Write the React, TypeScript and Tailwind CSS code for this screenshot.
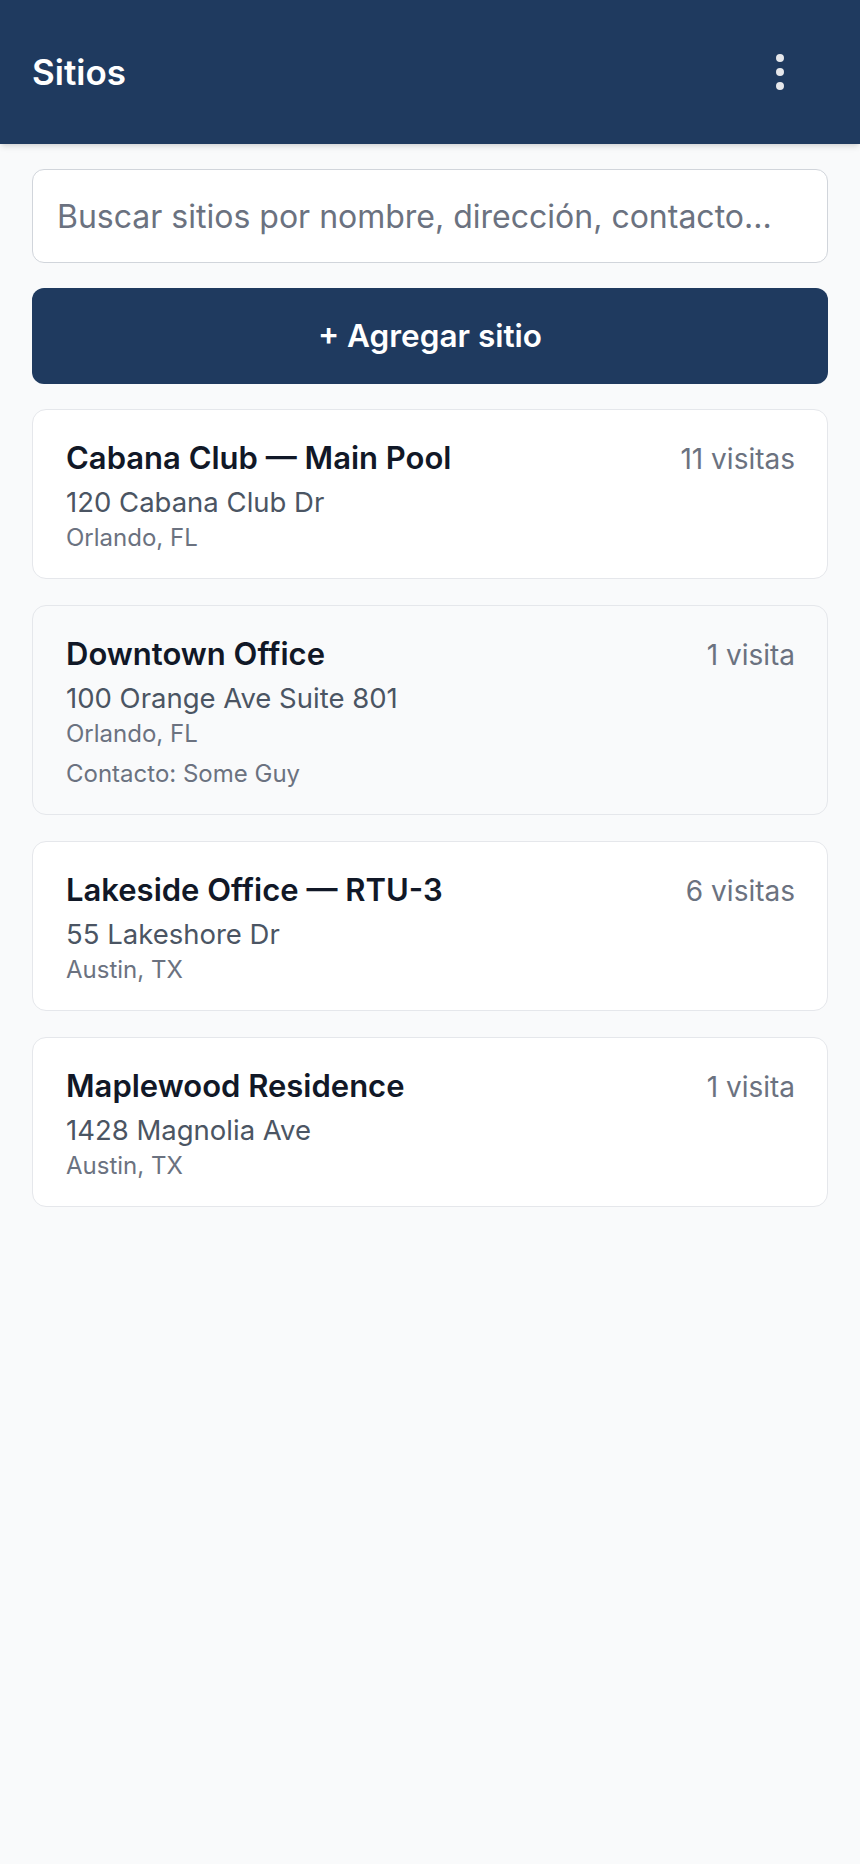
import { EllipsisVertical } from 'lucide-react';

interface Site {
  id: string;
  name: string;
  address: string;
  city: string;
  contact?: string;
  visits: number;
  active?: boolean;
}

const sites: Site[] = [
  { id: 'cabana', name: 'Cabana Club — Main Pool', address: '120 Cabana Club Dr', city: 'Orlando, FL', visits: 11 },
  {
    id: 'downtown',
    name: 'Downtown Office',
    address: '100 Orange Ave Suite 801',
    city: 'Orlando, FL',
    contact: 'Some Guy',
    visits: 1,
    active: true,
  },
  { id: 'lakeside', name: 'Lakeside Office — RTU-3', address: '55 Lakeshore Dr', city: 'Austin, TX', visits: 6 },
  { id: 'maplewood', name: 'Maplewood Residence', address: '1428 Magnolia Ave', city: 'Austin, TX', visits: 1 },
];

function SiteCard({ site }: { site: Site }) {
  return (
    <div
      className={
        site.active
          ? 'rounded-[14px] border border-[#e5e7eb] bg-[#f9fafb] pl-[33px] pr-[32px] py-[24px]'
          : 'rounded-[14px] border border-[#e5e7eb] bg-white pl-[33px] pr-[32px] py-[24px]'
      }
    >
      <div className="flex items-baseline justify-between gap-4">
        <h2 className="text-[31px] leading-[48px] font-semibold text-[#111827]">{site.name}</h2>
        <span className="shrink-0 text-[28px] leading-[40px] text-[#6b7280]">
          {site.visits} {site.visits === 1 ? 'visita' : 'visitas'}
        </span>
      </div>
      <p className="text-[27.5px] leading-[40px] text-[#4b5563]">{site.address}</p>
      <p className="text-[24px] leading-[32px] text-[#6b7280]">{site.city}</p>
      {site.contact && (
        <p className="mt-[8px] text-[24px] leading-[32px] text-[#6b7280]">Contacto: {site.contact}</p>
      )}
    </div>
  );
}

export default function App() {
  return (
    <div className="min-h-[1864px] bg-[#f9fafb] font-['Inter','Liberation_Sans',sans-serif]">
      {/* Header */}
      <header className="flex h-[144px] items-center justify-between bg-[#1f3a5f] pl-[32px] pr-[56px] shadow-md">
        <h1 className="text-[35px] leading-[56px] font-semibold text-white">Sitios</h1>
        <button className="text-[#e5e7eb]">
          <EllipsisVertical size={48} strokeWidth={2} />
        </button>
      </header>

      <main className="flex flex-col px-[32px] pt-[25px]">
        {/* Search */}
        <input
          type="text"
          placeholder="Buscar sitios por nombre, dirección, contacto..."
          className="h-[94px] w-full rounded-[12px] border border-[#d1d5db] bg-white px-[24px] text-[32px] leading-[48px] text-[#111827] outline-none placeholder:text-[#6b7280]"
        />

        <button className="mt-[25px] h-[96px] w-full rounded-[12px] bg-[#1f3a5f] text-[31.5px] leading-[48px] font-semibold text-white">
          + Agregar sitio
        </button>

        {/* Site list */}
        <div className="mt-[25px] flex flex-col gap-[26px]">
          {sites.map((site) => (
            <SiteCard key={site.id} site={site} />
          ))}
        </div>
      </main>
    </div>
  );
}
